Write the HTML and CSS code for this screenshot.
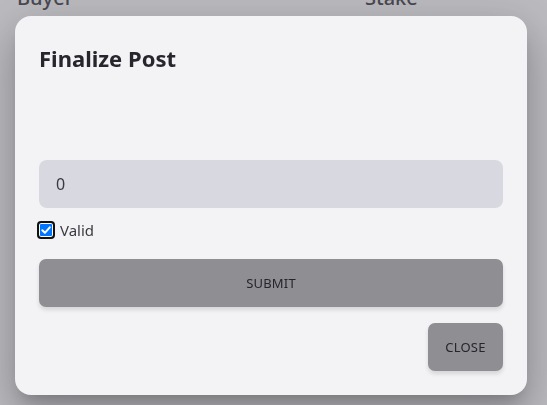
FILE: index.html
```html
<!DOCTYPE html>
<html>
<head>
<meta charset="utf-8">
<link rel="stylesheet" href="styles.css">
</head>
<body>
<div class="page">
  <div class="table-head">
    <span class="col col-buyer">Buyer</span>
    <span class="col">Stake</span>
  </div>
</div>
<div class="overlay">
  <div class="modal">
    <h2 class="modal-title">Finalize Post</h2>
    <div class="modal-body">
      <div class="field">0</div>
      <label class="check-row">
        <span class="checkbox">
          <svg viewBox="0 0 12 12" width="12" height="12"><path d="M2.3 6.2 L4.9 8.8 L9.8 3.3" fill="none" stroke="#fff" stroke-width="2" stroke-linecap="round" stroke-linejoin="round"/></svg>
        </span>
        <span class="check-label">Valid</span>
      </label>
      <button class="btn btn-submit">SUBMIT</button>
    </div>
    <div class="modal-actions">
      <button class="btn btn-close">CLOSE</button>
    </div>
  </div>
</div>
</body>
</html>
```
FILE: styles.css
```css
html, body {
  margin: 0;
  padding: 0;
  height: 100%;
}
body {
  background: #bcbbc0;
  font-family: "Noto Sans", "Open Sans", "Liberation Sans", sans-serif;
  color: #4a4951;
  overflow: hidden;
}
.page {
  padding: 0 17px;
}
.table-head {
  display: flex;
  margin-top: -13px;
  font-size: 20px;
  line-height: 22px;
  font-weight: 500;
}
.col-buyer {
  width: 348px;
}
.overlay {
  position: fixed;
  inset: 0;
  display: flex;
  align-items: flex-start;
  padding: 16px 0 0 15px;
}
.modal {
  width: 512px;
  height: 379px;
  box-sizing: border-box;
  background: #f3f3f5;
  border-radius: 16px;
  padding: 24px;
  box-shadow: 0 11px 15px -7px rgba(0,0,0,0.2), 0 24px 38px 3px rgba(0,0,0,0.14), 0 9px 46px 8px rgba(0,0,0,0.12);
  display: flex;
  flex-direction: column;
}
.modal-title {
  margin: 0;
  font-size: 22px;
  font-weight: 700;
  line-height: 36px;
  color: #27262d;
}
.modal-body {
  margin-top: 84px;
  display: flex;
  flex-direction: column;
}
.field {
  height: 48px;
  background: #d8d8e0;
  border-radius: 8px;
  padding: 0 17px;
  display: flex;
  align-items: center;
  font-size: 16px;
  color: #3a3940;
}
.check-row {
  display: flex;
  align-items: center;
  margin-top: 13px;
  margin-left: -2px;
  height: 18px;
}
.checkbox {
  width: 14px;
  height: 14px;
  border: 2px solid #111;
  border-radius: 4px;
  background: #0075ff;
  box-shadow: inset 0 0 0 1px #fff;
  display: flex;
  align-items: center;
  justify-content: center;
}
.check-label {
  margin-left: 5px;
  font-size: 15px;
  color: #3a3940;
}
.btn {
  border: none;
  font-family: inherit;
  font-size: 13px;
  color: #26252c;
  background: #8f8e93;
  border-radius: 7px;
  height: 48px;
  box-shadow: 0 3px 4px rgba(0,0,0,0.12);
  letter-spacing: 0.2px;
}
.btn-submit {
  margin-top: 20px;
  width: 100%;
}
.modal-actions {
  margin-top: 16px;
  display: flex;
  justify-content: flex-end;
}
.btn-close {
  width: 75px;
}
```
